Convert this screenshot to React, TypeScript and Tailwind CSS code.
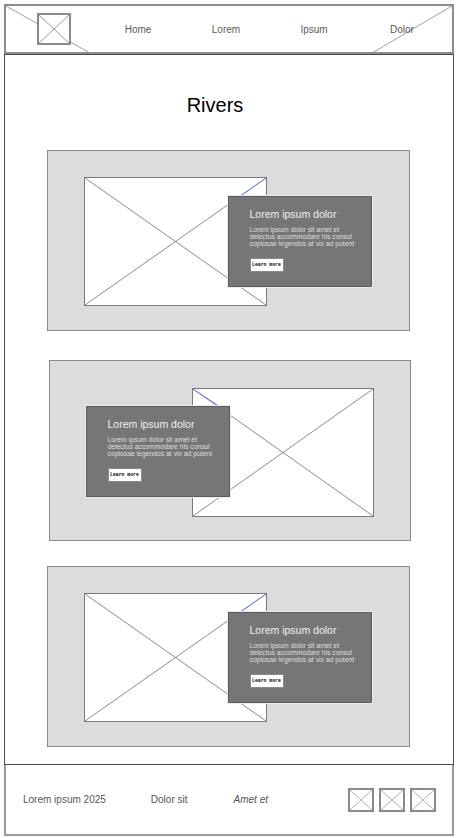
import React from "react";

const font = { fontFamily: '"Liberation Sans", Arial, sans-serif' };

function Placeholder({
  className,
  blue,
}: {
  className: string;
  blue?: [number, number, number, number];
}) {
  return (
    <div className={"relative bg-white border border-[#7a7a7a] " + className}>
      <svg
        className="absolute inset-0 w-full h-full"
        viewBox="0 0 100 100"
        preserveAspectRatio="none"
      >
        <line x1="0" y1="0" x2="100" y2="100" stroke="#6f6f6f" strokeWidth="0.8" vectorEffect="non-scaling-stroke" />
        <line x1="100" y1="0" x2="0" y2="100" stroke="#6f6f6f" strokeWidth="0.8" vectorEffect="non-scaling-stroke" />
        {blue && (
          <line
            x1={blue[0]}
            y1={blue[1]}
            x2={blue[2]}
            y2={blue[3]}
            stroke="#6b7cff"
            strokeWidth="1"
            vectorEffect="non-scaling-stroke"
          />
        )}
      </svg>
    </div>
  );
}

function Overlay({ className }: { className: string }) {
  return (
    <div
      className={
        "absolute bg-[#767676] border border-[#5c5c5c] outline outline-1 outline-[#ececec] pl-[21px] pt-[11px] " +
        className
      }
    >
      <div className="text-[10.5px] leading-[12px] text-[#f0f0f0]">Lorem ipsum dolor</div>
      <div className="mt-[6px] text-[6.8px] leading-[7.2px] text-[#dedede]">
        Lorem ipsum dolor sit amet et
        <br />
        delectus accommodare his consul
        <br />
        copiosae legendos at vix ad putent
      </div>
      <div
        className="mt-[10px] w-[34px] h-[14px] bg-white border border-[#8a8a8a] flex items-center justify-center text-[4.8px] font-bold text-black"
        style={{ fontFamily: '"Liberation Mono", "DejaVu Sans Mono", monospace' }}
      >
        Learn more
      </div>
    </div>
  );
}

function SmallIcon({ className }: { className?: string }) {
  return (
    <div className={"relative w-[26px] h-[24px] border-2 border-[#8a8a8a] " + (className ?? "")}>
      <svg className="absolute inset-0 w-full h-full" viewBox="0 0 100 100" preserveAspectRatio="none">
        <line x1="0" y1="0" x2="100" y2="100" stroke="#b0b0b0" strokeWidth="1" vectorEffect="non-scaling-stroke" />
        <line x1="100" y1="0" x2="0" y2="100" stroke="#b0b0b0" strokeWidth="1" vectorEffect="non-scaling-stroke" />
      </svg>
    </div>
  );
}

export default function App() {
  return (
    <div className="w-[458px] h-[838px] bg-white pt-[4px] px-[4px]" style={font}>
      {/* Header */}
      <header className="relative h-[50px] border-2 border-[#8c8c8c] flex items-center">
        <svg className="absolute inset-0 w-full h-full pointer-events-none" viewBox="0 0 446 46" preserveAspectRatio="none">
          <line x1="0" y1="0" x2="84" y2="47" stroke="#a0a0a0" strokeWidth="1" />
          <line x1="446" y1="0" x2="366" y2="47" stroke="#a0a0a0" strokeWidth="1" />
        </svg>
        <div className="ml-[31px] relative w-[34px] h-[32px] border-2 border-[#8a8a8a] bg-white">
          <svg className="absolute inset-0 w-full h-full" viewBox="0 0 100 100" preserveAspectRatio="none">
            <line x1="0" y1="0" x2="100" y2="100" stroke="#9a9a9a" strokeWidth="1" vectorEffect="non-scaling-stroke" />
            <line x1="100" y1="0" x2="0" y2="100" stroke="#9a9a9a" strokeWidth="1" vectorEffect="non-scaling-stroke" />
          </svg>
        </div>
        <nav className="ml-[23px] flex text-[10px] text-[#5a5a5a] relative">
          <span className="w-[88px] text-center">Home</span>
          <span className="w-[88px] text-center">Lorem</span>
          <span className="w-[88px] text-center">Ipsum</span>
          <span className="w-[88px] text-center">Dolor</span>
        </nav>
      </header>

      {/* Main */}
      <main className="h-[711px] border border-[#4a4a4a] flex flex-col items-center">
        <h1 className="mt-[38px] text-[20px] leading-[24px] text-black ml-[-28px]">Rivers</h1>

        <section className="mt-[33px] ml-[-2px] relative w-[363px] h-[181px] bg-[#dcdcdc] border border-[#8a8a8a]">
          <Placeholder className="absolute left-[36px] top-[26px] w-[183px] h-[129px]" blue={[100, 0, 85, 15]} />
          <Overlay className="left-[180px] top-[45px] w-[144px] h-[91px]" />
        </section>

        <section className="mt-[29px] ml-[1px] relative w-[362px] h-[181px] bg-[#dcdcdc] border border-[#8a8a8a]">
          <Placeholder className="absolute left-[142px] top-[27px] w-[182px] h-[129px]" blue={[0, 0, 15, 14]} />
          <Overlay className="left-[36px] top-[45px] w-[144px] h-[91px]" />
        </section>

        <section className="mt-[25px] ml-[-2px] relative w-[363px] h-[181px] bg-[#dcdcdc] border border-[#8a8a8a]">
          <Placeholder className="absolute left-[36px] top-[26px] w-[183px] h-[129px]" blue={[100, 0, 85, 15]} />
          <Overlay className="left-[180px] top-[45px] w-[144px] h-[91px]" />
        </section>
      </main>

      {/* Footer */}
      <footer className="h-[71px] border-2 border-t-0 border-[#9a9a9a] flex items-center text-[10px] text-[#555]">
        <span className="ml-[17px]">Lorem ipsum 2025</span>
        <span className="ml-[45px]">Dolor sit</span>
        <span className="ml-[46px] italic">Amet et</span>
        <div className="ml-auto mr-[16px] flex gap-[5px]">
          <SmallIcon />
          <SmallIcon />
          <SmallIcon />
        </div>
      </footer>
    </div>
  );
}
